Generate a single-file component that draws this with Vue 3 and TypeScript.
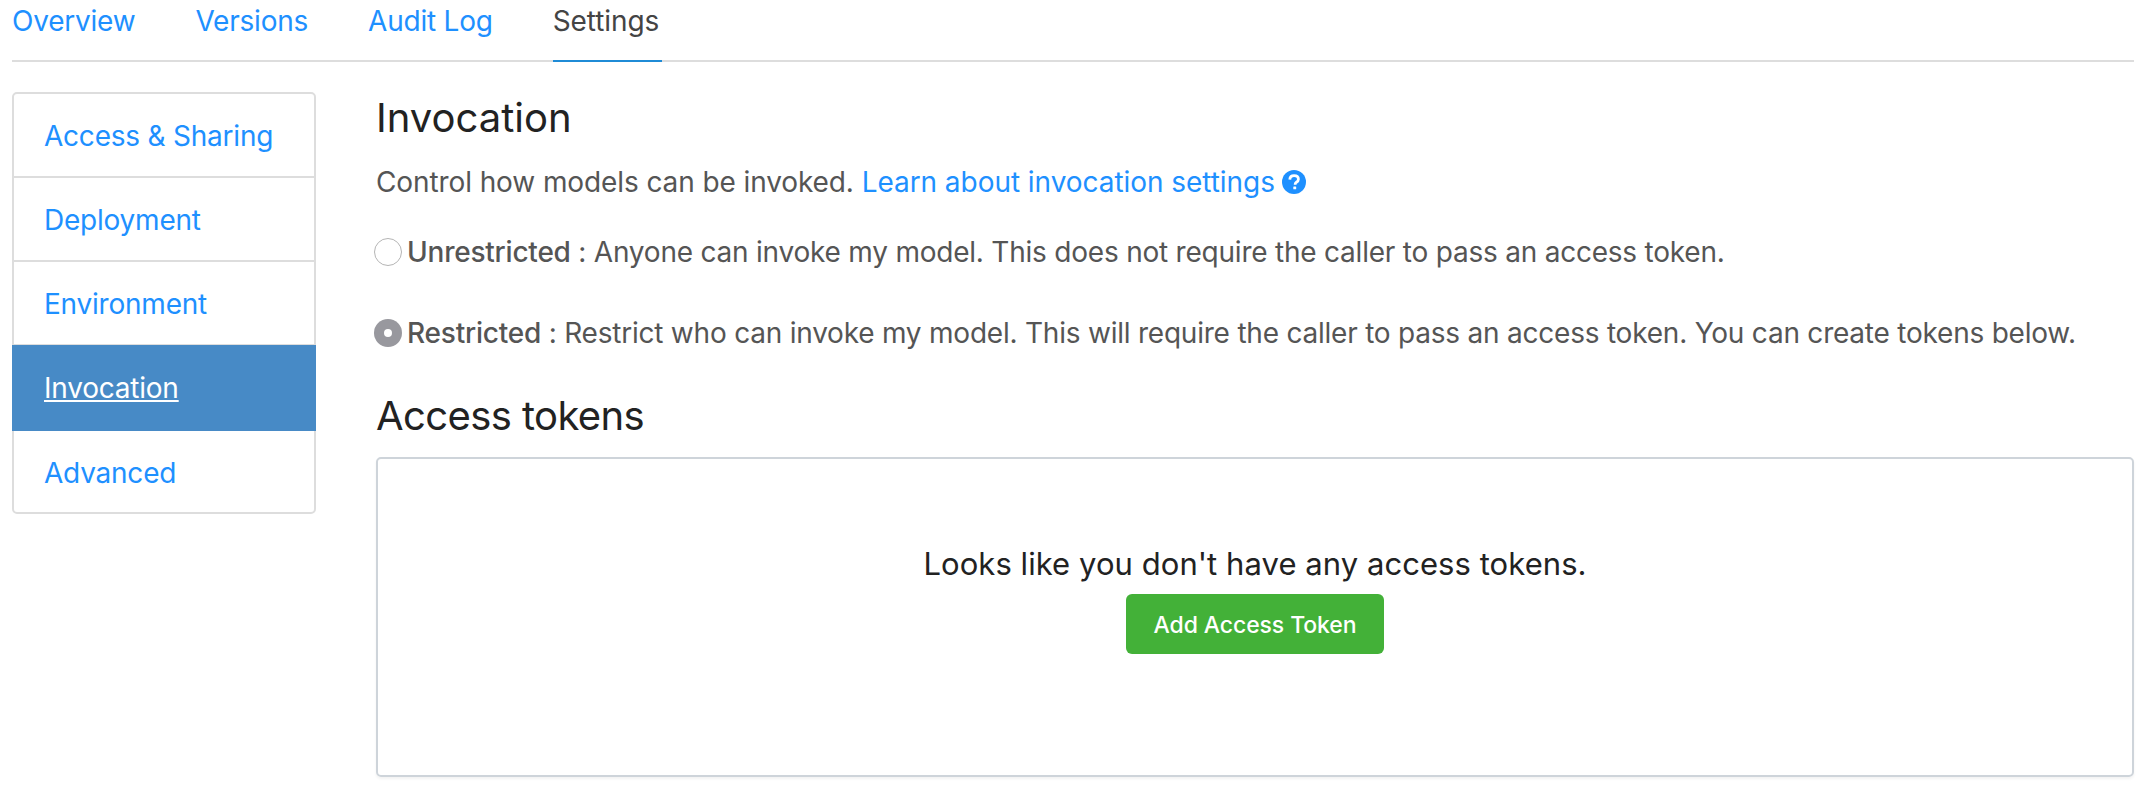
<script setup lang="ts">
const tabs = [
  { label: 'Overview', active: false },
  { label: 'Versions', active: false },
  { label: 'Audit Log', active: false },
  { label: 'Settings', active: true },
]
const side = [
  { label: 'Access & Sharing', active: false },
  { label: 'Deployment', active: false },
  { label: 'Environment', active: false },
  { label: 'Invocation', active: true },
  { label: 'Advanced', active: false },
]
</script>

<template>
  <div class="page">
    <nav class="tabs">
      <a v-for="t in tabs" :key="t.label" class="tab" :class="{ on: t.active }">{{ t.label }}</a>
    </nav>
    <div class="body">
      <aside class="side">
        <a v-for="s in side" :key="s.label" class="item" :class="{ on: s.active }">{{ s.label }}</a>
      </aside>
      <main class="main">
        <h2 class="h1">Invocation</h2>
        <p class="lead">Control how models can be invoked. <a class="link">Learn about invocation settings</a>
          <svg class="help" viewBox="0 0 24 24" width="24" height="24"><circle cx="12" cy="12" r="12" fill="#1e90ff"/><path d="M7.8 9.6c.1-2.5 1.9-3.9 4.3-3.9 2.5 0 4.3 1.4 4.3 3.5 0 1.6-.9 2.4-2 3.1-.9.6-1.2 1-1.2 1.9v.5" fill="none" stroke="#fff" stroke-width="2.8"/><rect x="11.3" y="16.4" width="2.9" height="2.9" rx=".5" fill="#fff"/></svg>
        </p>
        <div class="opt first"><span class="radio"></span><span class="txt"><b>Unrestricted</b> : Anyone can invoke my model. This does not require the caller to pass an access token.</span></div>
        <div class="opt second"><span class="radio sel"></span><span class="txt"><b>Restricted</b> : Restrict who can invoke my model. This will require the caller to pass an access token. You can create tokens below.</span></div>
        <h2 class="h2">Access tokens</h2>
        <section class="box">
          <div class="empty">Looks like you don't have any access tokens.</div>
          <button class="btn">Add Access Token</button>
        </section>
      </main>
    </div>
  </div>
</template>

<style>
html, body { margin: 0; background: #fff; }
</style>
<style scoped>
.page { width: 2146px; height: 794px; overflow: hidden; font-family: Inter, "Liberation Sans", sans-serif; font-size: 28px; letter-spacing: -0.22px; font-feature-settings: "calt" 0; color: #555; padding: 0 12px; box-sizing: border-box; }
.tabs { display: flex; gap: 60px; height: 62px; border-bottom: 2px solid #ddd; box-sizing: border-box; }
.tab { color: #1e90ff; height: 62px; box-sizing: border-box; line-height: 42px; }
.tab.on { color: #444; border-bottom: 2px solid #1f8bd6; padding-right: 3px; letter-spacing: -0.1px; }
.body { display: flex; margin-top: 30px; }
.side { width: 304px; height: 422px; box-sizing: border-box; border: 2px solid #ddd; border-radius: 5px; display: flex; flex-direction: column; }
.item { height: 84px; flex: none; box-sizing: border-box; padding-left: 30px; line-height: 84px; color: #1e90ff; border-bottom: 2px solid #ddd; }
.item:last-child { border-bottom: 0; }
.item.on { background: #478ac6; color: #fff; text-decoration: underline; margin: -1px -2px 0; height: 86px; line-height: 86px; padding-left: 32px; border-bottom: 0; }
.main { margin-left: 60px; width: 1758px; }
.h1, .h2 { margin: 0; font-weight: 400; font-size: 40px; color: #222; line-height: 52px; }
.h1 { letter-spacing: 0; }
.lead { margin: 18px 0 0; line-height: 40px; display: flex; align-items: center; white-space: pre; letter-spacing: -0.1px; }
.link { color: #1e90ff; letter-spacing: -0.05px; }
.help { margin-left: 7px; }
.opt { display: flex; align-items: center; white-space: pre; line-height: 40px; margin-left: -2px; }
.first { margin-top: 30px; }
.second { margin-top: 41px; }
.txt b { font-weight: 500; }
.radio { width: 28px; height: 28px; border-radius: 50%; box-sizing: border-box; border: 1px solid #b5b5b5; margin-right: 5px; flex: none; background: #fff; }
.radio.sel { background: #98989e; border: 0; position: relative; }
.radio.sel::after { content: ""; position: absolute; left: 10px; top: 10px; width: 8px; height: 8px; border-radius: 50%; background: #fff; }
.h2 { margin-top: 37px; letter-spacing: -0.6px; }
.box { margin-top: 15px; width: 1758px; height: 320px; box-sizing: border-box; border: 2px solid #ced4da; border-radius: 5px; display: flex; flex-direction: column; align-items: center; padding-top: 80px; box-shadow: 0 2px 3px rgba(0,0,0,.05); }
.empty { font-size: 31px; letter-spacing: 0.06px; color: #222; line-height: 50px; }
.btn { margin-top: 5px; width: 258px; height: 60px; border: 0; padding: 2px 0 0; border-radius: 6px; background: #43b138; color: #fff; font: inherit; letter-spacing: -0.1px; font-weight: 500; font-size: 23px; }
</style>
